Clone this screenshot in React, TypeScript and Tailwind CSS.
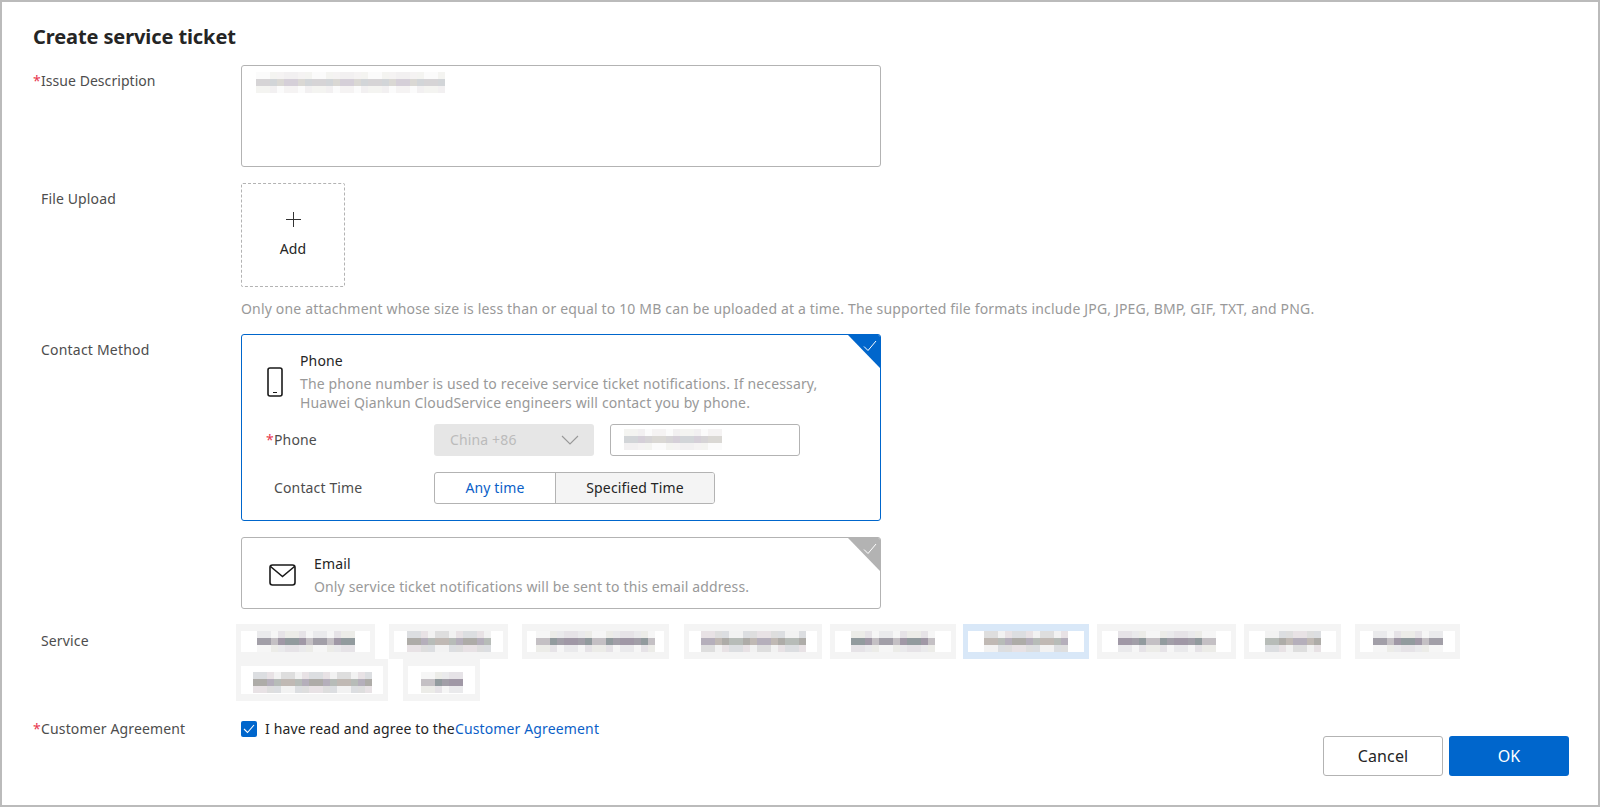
const palette = ["#c4c0c4", "#aeaca8", "#a29fa8", "#b7bcb8", "#a098a6", "#c0b9b4", "#929b9e", "#b5afbb"];
const pale = ["#f2f2f2", "#e6e3e7", "#dedede", "#ecece8", "#e8e2e5", "#f6f6f6", "#dcdee1", "#eaeaec"];
const softMid = ["#d6d4d6", "#cfcdd0", "#dad8d4", "#d0d2d0", "#d5cfd8", "#dbd5d0", "#d2d5d8", "#d8d6d9"];
const softPale = ["#f8f8f8", "#f2f0f1", "#eeeeee", "#f4f4f1", "#f0f0f3", "#fbfbfb", "#ededed", "#f5f3f3"];

function Mosaic({ w, seed, soft }: { w: number; seed: number; soft?: boolean }) {
  const cols = Math.floor(w / 7);
  const cells = [];
  for (let r = 0; r < 3; r++) {
    for (let c = 0; c < cols; c++) {
      const i = (seed * 7 + c * c * 3 + c * 5 + r * 11) % 8;
      const mid = soft ? softMid : palette;
      const light = soft ? softPale : pale;
      const fill = r === 1 ? mid[i] : light[i];
      cells.push(<rect key={`${r}-${c}`} x={c * 7} y={r * 7} width="7" height="7" fill={fill} />);
    }
  }
  return (
    <svg width={cols * 7} height={21} className="block">
      {cells}
    </svg>
  );
}

function Chip({ w, text, seed, active, tall, className }: { w: number; text: number; seed: number; active?: boolean; tall?: boolean; className?: string }) {
  return (
    <div
      className={`${tall ? "h-[42px]" : "h-[35px]"} py-[7px] px-[5px] ${active ? "bg-[#d9e8f8]" : "bg-[#f4f4f4]"} ${className ?? ""}`}
      style={{ width: w }}
    >
      <div className={`${tall ? "h-[28px] pt-[6px]" : "h-[21px]"} bg-white flex justify-center`}>
        <Mosaic w={text} seed={seed} />
      </div>
    </div>
  );
}

function Star() {
  return <span className="text-[#e8384f] w-[8px] inline-block">*</span>;
}

export default function App() {
  return (
    <div className="relative w-[1600px] h-[807px] overflow-hidden border-2 border-[#bbbbbb] bg-white pl-[31px] pt-[21px] text-[14px] tracking-[0.14px] text-[#4d4d4d] font-['Noto_Sans','Liberation_Sans',sans-serif]">
      <h1 className="text-[20px] leading-[28px] font-bold tracking-[-0.1px] text-[#252525]">Create service ticket</h1>

      <div className="flex mt-[14px]">
        <div className="w-[208px] leading-[20px] pt-[6px] tracking-[0.05px]"><Star />Issue Description</div>
        <div className="w-[640px] h-[102px] border border-[#b3b3b3] rounded-[3px] pl-[14px] pt-[6px]">
          <Mosaic w={189} seed={3} soft />
        </div>
      </div>

      <div className="flex mt-[16px]">
        <div className="w-[208px] pl-[8px] leading-[20px] pt-[6px]">File Upload</div>
        <div>
          <div className="w-[104px] h-[104px] border border-dashed border-[#b3b3b3] rounded-[2px] flex flex-col items-center pt-[28px]">
            <svg width="15" height="15" viewBox="0 0 15 15" fill="none" stroke="#333" strokeWidth="1">
              <path d="M7.5 0v15M0 7.5h15" />
            </svg>
            <div className="text-[#252525] leading-[20px] mt-[12px]">Add</div>
          </div>
        </div>
      </div>
      <div className="pl-[208px] mt-[12px] leading-[20px] tracking-[0.17px] text-[#999999]">
        Only one attachment whose size is less than or equal to 10 MB can be uploaded at a time. The supported file formats include JPG, JPEG, BMP, GIF, TXT, and PNG.
      </div>

      <div className="flex mt-[15px]">
        <div className="w-[208px] pl-[8px] leading-[20px] pt-[6px] tracking-[0.2px]">Contact Method</div>
        <div className="w-[640px]">
          <div className="relative h-[187px] border border-[#0066cc] rounded-[3px] overflow-hidden pl-[24px] pt-[16px]">
            <div className="absolute right-0 top-0 w-0 h-0 border-t-[33px] border-l-[32px] border-t-[#0066cc] border-l-transparent" />
            <svg className="absolute right-[3px] top-[5px]" width="14" height="12" viewBox="0 0 14 12" fill="none" stroke="#fff" strokeWidth="1">
              <path d="M1 6.5l4 4L13 1" />
            </svg>
            <div className="flex items-center">
              <svg className="ml-[1px] mr-[17px] shrink-0" width="16" height="30" viewBox="0 0 16 30" fill="none" stroke="#1a1a1a">
                <rect x="1" y="1" width="14" height="28" rx="2" strokeWidth="1.6" />
                <path d="M6 25.5h4" strokeWidth="1.2" />
              </svg>
              <div className="leading-[19px]">
                <div className="text-[#252525]">Phone</div>
                <div className="text-[#999999] mt-[4px] w-[540px]">
                  The phone number is used to receive service ticket notifications. If necessary,<br />Huawei Qiankun CloudService engineers will contact you by phone.
                </div>
              </div>
            </div>
            <div className="flex items-center mt-[12px] h-[32px]">
              <div className="w-[168px] pb-[2px]"><Star />Phone</div>
              <div className="w-[160px] h-[32px] bg-[#e6e6e6] rounded-[3px] flex items-center justify-between pl-[16px] pr-[15px] pb-[2px] text-[#bbbbbb]">
                <span>China +86</span>
                <svg className="mt-[2px]" width="18" height="10" viewBox="0 0 18 10" fill="none" stroke="#999" strokeWidth="1.1">
                  <path d="M1 1l8 8 8-8" />
                </svg>
              </div>
              <div className="w-[190px] h-[32px] ml-[16px] border border-[#b3b3b3] rounded-[3px] pl-[13px] pt-[4px]">
                <Mosaic w={98} seed={5} soft />
              </div>
            </div>
            <div className="flex items-center mt-[16px] h-[32px]">
              <div className="w-[168px] pl-[8px] pb-[2px]">Contact Time</div>
              <div className="flex h-[32px] w-[281px] border border-[#b3b3b3] rounded-[3px] overflow-hidden">
                <div className="w-[120px] flex items-center justify-center pb-[2px] text-[#0b5fc8]">Any time</div>
                <div className="flex-1 flex items-center justify-center pb-[2px] bg-[#f4f4f4] text-[#252525] border-l border-[#b3b3b3]">Specified Time</div>
              </div>
            </div>
          </div>

          <div className="relative h-[72px] mt-[16px] border border-[#b3b3b3] rounded-[3px] overflow-hidden pl-[27px] pt-[4px] flex items-center">
            <div className="absolute right-0 top-0 w-0 h-0 border-t-[33px] border-l-[32px] border-t-[#b3b3b3] border-l-transparent" />
            <svg className="absolute right-[3px] top-[5px]" width="14" height="12" viewBox="0 0 14 12" fill="none" stroke="#fff" strokeWidth="1">
              <path d="M1 6.5l4 4L13 1" />
            </svg>
            <svg className="mr-[18px] shrink-0" width="27" height="22" viewBox="0 0 27 22" fill="none" stroke="#1a1a1a" strokeWidth="1.6">
              <rect x="1" y="1" width="25" height="20" rx="2.5" />
              <path d="M1.5 2.5l12 10 12-10" />
            </svg>
            <div className="leading-[19px]">
              <div className="text-[#252525]">Email</div>
              <div className="text-[#999999] mt-[4px]">Only service ticket notifications will be sent to this email address.</div>
            </div>
          </div>
        </div>
      </div>

      <div className="flex mt-[15px]">
        <div className="w-[203px] pl-[8px] leading-[20px] pt-[7px]">Service</div>
        <div className="w-[1300px]">
          <div className="flex">
            <Chip w={139} text={98} seed={1} />
            <Chip w={119} text={84} seed={2} className="ml-[14px]" />
            <Chip w={147} text={119} seed={3} className="ml-[14px]" />
            <Chip w={138} text={105} seed={4} className="ml-[15px]" />
            <Chip w={126} text={84} seed={5} className="ml-[8px]" />
            <Chip w={126} text={84} seed={6} active className="ml-[7px]" />
            <Chip w={139} text={98} seed={7} className="ml-[8px]" />
            <Chip w={97} text={56} seed={8} className="ml-[8px]" />
            <Chip w={105} text={70} seed={9} className="ml-[14px]" />
          </div>
          <div className="flex">
            <Chip w={152} text={119} seed={10} tall />
            <Chip w={77} text={42} seed={11} tall className="ml-[15px]" />
          </div>
        </div>
      </div>

      <div className="flex items-center mt-[18px] leading-[20px]">
        <div className="w-[208px]"><Star />Customer Agreement</div>
        <span className="w-[16px] h-[16px] bg-[#0066cc] rounded-[2px] flex items-center justify-center">
          <svg width="12" height="10" viewBox="0 0 12 10" fill="none" stroke="#fff" strokeWidth="1.1">
            <path d="M1 5l3.5 3.5L11 1" />
          </svg>
        </span>
        <span className="ml-[8px] text-[#252525]">I have read and agree to the</span>
        <a className="text-[#0b5fc8]">Customer Agreement</a>
      </div>

      <div className="absolute right-[29px] bottom-[29px] flex gap-[6px] text-[16px]">
        <button className="w-[120px] h-[40px] border border-[#b3b3b3] rounded-[3px] bg-white text-[#252525]">Cancel</button>
        <button className="w-[120px] h-[40px] rounded-[3px] bg-[#0066cc] text-white">OK</button>
      </div>
    </div>
  );
}
